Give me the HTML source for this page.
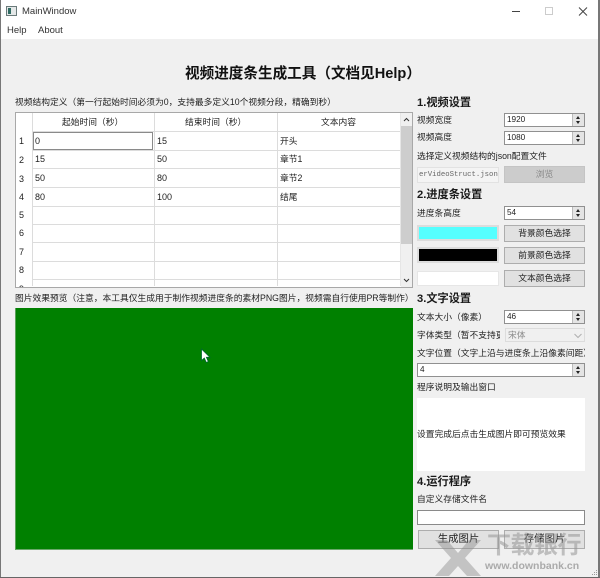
<!DOCTYPE html>
<html><head><meta charset="utf-8">
<style>
html,body{margin:0;padding:0;background:#555}
body{width:600px;height:578px;overflow:hidden;position:relative;font-family:"Liberation Sans","Noto Sans CJK SC",sans-serif;font-size:8.75px;color:#222}
#w{position:absolute;left:0;top:0;width:600px;height:578px;filter:blur(.3px)}
.a{position:absolute;box-sizing:border-box;white-space:nowrap}
.t{position:absolute;white-space:nowrap;line-height:12px;height:12px}
.h{font-weight:bold;font-size:11.2px;line-height:14px;height:14px;color:#1a1a1a}
.in{position:absolute;box-sizing:border-box;background:#fff;border:1px solid #909090;height:14px;line-height:12px;padding-left:2px;font-size:8.2px}
.sp{position:absolute;right:0;top:0;width:11px;height:12px;background:#e4e4e4;border-left:1px solid #bbb}
.sp:before{content:"";position:absolute;left:3px;top:1.5px;border:2.5px solid transparent;border-top:0;border-bottom:3px solid #222}
.sp:after{content:"";position:absolute;left:3px;top:7px;border:2.5px solid transparent;border-bottom:0;border-top:3px solid #222}
.b{position:absolute;box-sizing:border-box;background:#e1e1e1;border:1px solid #adadad;text-align:center;font-size:8.75px;line-height:15px;height:17px;color:#222}
.hl{position:absolute;left:32px;width:368px;height:1px;background:#dcdcdc}
.vl{position:absolute;top:113px;width:1px;height:173px;background:#dcdcdc}
.rn{position:absolute;left:19px;width:8px;text-align:left;line-height:12px;font-size:9px}
.c{position:absolute;line-height:12px;font-size:8.75px}
.n{font-size:9px}
</style></head><body>
<div id="w">
<div class="a" style="left:0;top:0;width:600px;height:39px;background:#fff"></div>
<div class="a" style="left:0;top:39px;width:599px;height:538px;background:#f0f0f0"></div>
<div class="a" style="left:0;top:0;width:1px;height:578px;background:#777"></div>
<div class="a" style="left:598px;top:0;width:2px;height:578px;background:#777"></div>
<div class="a" style="left:0;top:577px;width:600px;height:1px;background:#666"></div>

<svg class="a" style="left:6px;top:6px" width="12" height="12"><rect x=".5" y=".5" width="10" height="9" fill="#e4e8e8" stroke="#6a7a7a"/><rect x="2" y="2" width="3" height="6" fill="#2f6b63"/></svg>
<div class="t" style="left:22px;top:6px;font-size:9.5px;color:#333">MainWindow</div>
<div class="t" style="left:7px;top:25px;font-size:9.5px;color:#333">Help</div>
<div class="t" style="left:38px;top:25px;font-size:9.5px;color:#333">About</div>
<svg class="a" style="left:510px;top:5px" width="88" height="14"><path d="M2 6.5H10" stroke="#444" stroke-width="1"/><rect x="35.5" y="2.5" width="7" height="7" fill="none" stroke="#ccc"/><path d="M69 2.5L77 10.5M77 2.5L69 10.5" stroke="#444" stroke-width="1" fill="none"/></svg>

<div class="t" style="left:185px;top:64px;font-size:14.6px;font-weight:bold;line-height:20px;height:20px;color:#111">视频进度条生成工具（文档见Help）</div>
<div class="t" style="left:15px;top:96px;">视频结构定义（第一行起始时间必须为0，支持最多定义10个视频分段，精确到秒）</div>

<div class="a" style="left:15px;top:112px;width:398px;height:176px;background:#fff;border:1px solid #a8a8a8"></div>
<div class="vl" style="left:32px"></div><div class="vl" style="left:154px"></div><div class="vl" style="left:277px"></div><div class="vl" style="left:400px;background:#e6e6e6"></div>
<div class="hl" style="top:131px"></div><div class="hl" style="top:150px"></div><div class="hl" style="top:168px"></div><div class="hl" style="top:187px"></div><div class="hl" style="top:206px"></div><div class="hl" style="top:224px"></div><div class="hl" style="top:242px"></div><div class="hl" style="top:261px"></div><div class="hl" style="top:279px"></div>
<div class="c" style="left:62px;top:116px">起始时间（秒）</div>
<div class="c" style="left:185px;top:116px">结束时间（秒）</div>
<div class="c" style="left:321px;top:116px">文本内容</div>
<div class="a" style="left:33px;top:132px;width:120px;height:18px;background:#fff;border:1px solid #8a8a8a"></div>
<div class="c n" style="left:35px;top:135px">0</div><div class="c n" style="left:157px;top:135px">15</div><div class="c" style="left:280px;top:135px">开头</div>
<div class="c n" style="left:35px;top:153px">15</div><div class="c n" style="left:157px;top:153px">50</div><div class="c" style="left:280px;top:153px">章节1</div>
<div class="c n" style="left:35px;top:172px">50</div><div class="c n" style="left:157px;top:172px">80</div><div class="c" style="left:280px;top:172px">章节2</div>
<div class="c n" style="left:35px;top:191px">80</div><div class="c n" style="left:157px;top:191px">100</div><div class="c" style="left:280px;top:191px">结尾</div>
<div class="rn" style="top:135px">1</div><div class="rn" style="top:154px">2</div><div class="rn" style="top:173px">3</div><div class="rn" style="top:191px">4</div><div class="rn" style="top:209px">5</div><div class="rn" style="top:227px">6</div><div class="rn" style="top:246px">7</div><div class="rn" style="top:264px">8</div>
<div class="a" style="left:16px;top:283px;width:16px;height:4px;overflow:hidden"><div class="rn" style="left:3px;top:0">9</div></div>

<div class="a" style="left:401px;top:113px;width:11px;height:174px;background:#f0f0f0"></div>
<div class="a" style="left:401px;top:126px;width:11px;height:118px;background:#cdcdcd"></div>
<svg class="a" style="left:401px;top:113px" width="11" height="174"><path d="M3 8L5.5 5.5L8 8M3 166L5.5 168.5L8 166" fill="none" stroke="#333" stroke-width="1"/></svg>

<div class="t" style="left:15px;top:292px;">图片效果预览（注意，本工具仅生成用于制作视频进度条的素材PNG图片，视频需自行使用PR等制作）</div>
<div class="a" style="left:15px;top:308px;width:398px;height:242px;background:#008000;border-bottom:1px solid #6aa86a;border-left:1px solid #5aa05a"></div>
<svg class="a" style="left:200px;top:348px" width="12" height="16"><path d="M1.5 1V12.5L4.3 10L6.3 14.5L8.3 13.6L6.4 9.3H10Z" fill="#fff" stroke="#063" stroke-width=".8"/></svg>

<div class="t h" style="left:417px;top:96px">1.视频设置</div>
<div class="t" style="left:417px;top:114px">视频宽度</div>
<div class="in" style="left:504px;top:113px;width:81px">1920<span class="sp"></span></div>
<div class="t" style="left:417px;top:131px">视频高度</div>
<div class="in" style="left:504px;top:131px;width:81px">1080<span class="sp"></span></div>
<div class="t" style="left:417px;top:150px">选择定义视频结构的json配置文件</div>
<div class="a" style="left:417px;top:167px;width:82px;height:16px;background:#f4f4f4;border:1px solid #e2e2e2;font:7.3px/14px 'Liberation Mono',monospace;color:#666;padding-left:1px;overflow:hidden">erVideoStruct.json</div>
<div class="b" style="left:504px;top:166px;width:81px;background:#cccccc;border-color:#c4c4c4;color:#888">浏览</div>

<div class="t h" style="left:417px;top:188px">2.进度条设置</div>
<div class="t" style="left:417px;top:207px">进度条高度</div>
<div class="in" style="left:504px;top:206px;width:81px">54<span class="sp"></span></div>
<div class="a" style="left:417px;top:225px;width:82px;height:16px;background:#55ffff;border:2px solid #dcdcdc"></div>
<div class="b" style="left:504px;top:225px;width:81px">背景颜色选择</div>
<div class="a" style="left:417px;top:247px;width:82px;height:16px;background:#000;border:2px solid #dcdcdc"></div>
<div class="b" style="left:504px;top:247px;width:81px">前景颜色选择</div>
<div class="a" style="left:417px;top:271px;width:82px;height:15px;background:#fff;border:1px solid #e6e6e6"></div>
<div class="b" style="left:504px;top:270px;width:81px">文本颜色选择</div>

<div class="t h" style="left:417px;top:292px">3.文字设置</div>
<div class="t" style="left:417px;top:311px">文本大小（像素）</div>
<div class="in" style="left:504px;top:310px;width:81px">46<span class="sp"></span></div>
<div class="t" style="left:417px;top:329px;width:83px;overflow:hidden">字体类型（暂不支持更改）</div>
<div class="a" style="left:505px;top:328px;width:80px;height:14px;background:#f0f0f0;border:1px solid #dcdcdc;line-height:12px;padding-left:2px;color:#888">宋体</div>
<svg class="a" style="left:573px;top:331px" width="10" height="10"><path d="M1.5 3L5 6.5L8.5 3" fill="none" stroke="#b0b0b0"/></svg>
<div class="t" style="left:417px;top:347px;width:168px;overflow:hidden">文字位置（文字上沿与进度条上沿像素间距）</div>
<div class="in" style="left:417px;top:363px;width:168px">4<span class="sp"></span></div>
<div class="t" style="left:417px;top:381px">程序说明及输出窗口</div>
<div class="a" style="left:417px;top:398px;width:168px;height:73px;background:#fff"></div>
<div class="t" style="left:417px;top:428px">设置完成后点击生成图片即可预览效果</div>

<div class="t h" style="left:417px;top:475px">4.运行程序</div>
<div class="t" style="left:417px;top:493px">自定义存储文件名</div>
<div class="a" style="left:417px;top:510px;width:168px;height:15px;background:#fff;border:1px solid #8a8a8a"></div>
<div class="b" style="left:418px;top:530px;width:81px;height:19px;line-height:17px;font-size:10.4px">生成图片</div>
<div class="b" style="left:504px;top:530px;width:81px;height:19px;line-height:17px;font-size:10.4px">存储图片</div>

<svg class="a" style="left:435px;top:540px" width="46" height="36"><path d="M0 0H12L23 13L34 0H46L30 18L46 36H32L23 26L14 36H0L16 18Z" fill="#8c8c8c" fill-opacity=".45"/></svg>
<div class="t" style="left:487px;top:532px;font-size:24px;line-height:28px;height:28px;font-weight:bold;color:rgba(150,150,150,.55);letter-spacing:-.5px">下载银行</div>
<div class="t" style="left:485px;top:560px;font-size:10.5px;font-weight:bold;color:rgba(140,140,140,.7)">www.downbank.cn</div>
<svg class="a" style="left:591px;top:570px" width="7" height="7"><path d="M5 0h1v1h-1zM3 2h1v1h-1zM5 2h1v1h-1zM1 4h1v1h-1zM3 4h1v1h-1zM5 4h1v1h-1z" fill="#999"/></svg>
</div>
</body></html>
